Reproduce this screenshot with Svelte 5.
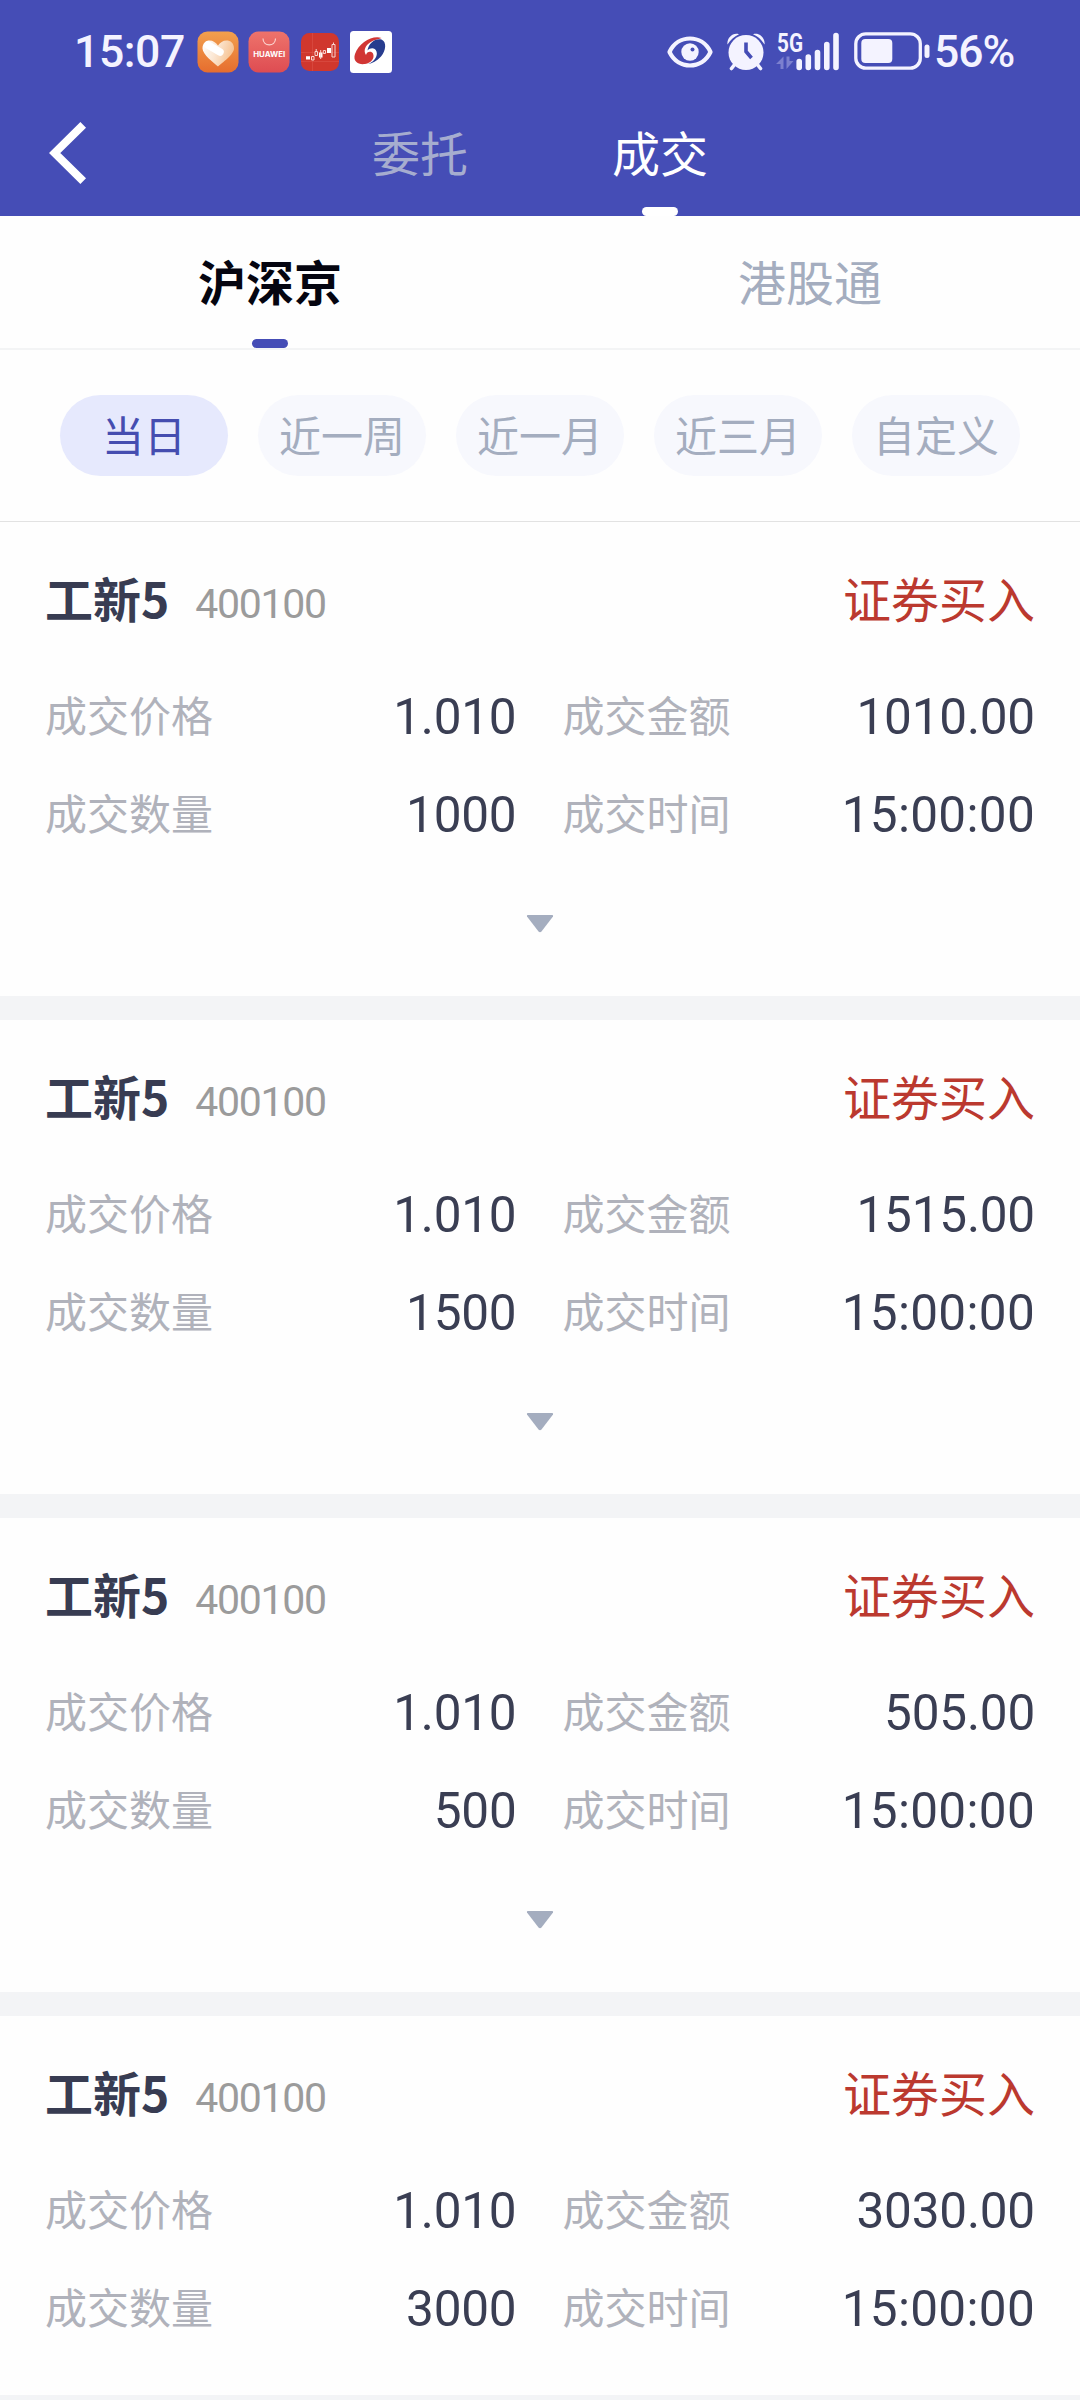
<script>
  const ranges = ['当日', '近一周', '近一月', '近三月', '自定义'];
  let activeRange = $state('当日');

  const trades = [
    { name: '工新5', code: '400100', side: '证券买入', price: '1.010', amount: '1010.00', qty: '1000', time: '15:00:00' },
    { name: '工新5', code: '400100', side: '证券买入', price: '1.010', amount: '1515.00', qty: '1500', time: '15:00:00' },
    { name: '工新5', code: '400100', side: '证券买入', price: '1.010', amount: '505.00', qty: '500', time: '15:00:00' },
    { name: '工新5', code: '400100', side: '证券买入', price: '1.010', amount: '3030.00', qty: '3000', time: '15:00:00' }
  ];
</script>

<div class="screen">
  <header>
    <div class="status">
      <span class="clock">15:07</span>
      <div class="apps">
        <svg width="42" height="42" viewBox="0 0 42 42">
          <defs>
            <linearGradient id="orange" x1="0" y1="0" x2="0" y2="1"><stop offset="0" stop-color="#f2a04e" /><stop offset="1" stop-color="#e66d2e" /></linearGradient>
            <linearGradient id="heart" x1="0" y1="0" x2="1" y2="0.3"><stop offset="0" stop-color="#fff" /><stop offset="0.5" stop-color="#fbe6d2" /><stop offset="1" stop-color="#f6c393" /></linearGradient>
          </defs>
          <rect x="0.5" y="0.5" width="41" height="41" rx="10" fill="url(#orange)" />
          <path d="M21 35.5C17 32 5.500 23.500 5.500 17.500C5.500 12 9 9.500 12.500 9.500C16 9.500 19 11.500 21 14.500C23 11.500 26 9.500 29.500 9.500C33.500 9.500 37 12 37 17.500C37 23.500 25 32 21 35.500Z" fill="url(#heart)" />
          <path d="M11 14L23 21" stroke="#fff" stroke-width="7.500" stroke-linecap="round" />
        </svg>
        <svg width="42" height="42" viewBox="0 0 42 42">
          <defs>
            <linearGradient id="coral" x1="0" y1="0" x2="0" y2="1"><stop offset="0" stop-color="#ee736b" /><stop offset="1" stop-color="#de4c52" /></linearGradient>
          </defs>
          <rect x="0.500" y="0.500" width="41" height="41" rx="10" fill="url(#coral)" />
          <path d="M15 7.500C15 16 27.500 16 27.500 7.500" fill="none" stroke="#fbd3cf" stroke-width="1.200" />
          <text x="21.200" y="26.300" text-anchor="middle" textLength="32" lengthAdjust="spacingAndGlyphs" class="brand">HUAWEI</text>
        </svg>
        <svg width="38" height="38" viewBox="0 0 38 38">
          <rect x="0" y="0" width="38" height="38" rx="8.500" fill="#d0372d" />
          <path d="M0 19.500H38M0 28.500H38M11.500 0V38" stroke="#dc5348" stroke-width="0.600" />
          <path d="M5 23.300H9V26.500H5ZM18 19.500H21.500V24.500H18ZM26 15H30V20H26Z" fill="#fff" />
          <path d="M10.500 23.500H13V27H10.500ZM14 18.500H16.500V22.500H14ZM22.300 17.500H24.500V20.500H22.300ZM31 11.500H34V24H31Z" fill="none" stroke="#f8d5d0" stroke-width="1" />
          <path d="M15.200 16V18M19.700 17V26M32.500 9.500V11.500" stroke="#f8d5d0" stroke-width="1" />
        </svg>
        <svg width="42" height="42" viewBox="0 0 42 42">
          <rect x="0" y="0" width="42" height="42" rx="3.500" fill="#fff" />
          <path d="M31.500 7C22 4 9 12 5 23C2.500 30.500 8.500 34 15 33C21.500 32 25 27 23 22.500C21.500 19.500 16.500 20.500 16 24C13 19.500 15.500 14.500 20 11.500C24 8.800 28 8.500 31.500 7Z" fill="#d13634" />
          <path d="M31.500 8.500C37 11 36 19.500 31 25.500C27 30 22 32.500 18 33C24.500 30.500 28 25 26.500 20.500C25 16 20 16.500 17.500 19.500C18.500 12 25.500 7 31.500 8.500Z" fill="#273c8e" />
        </svg>
      </div>
      <div class="system">
        <svg width="46" height="32" viewBox="0 0 46 32">
          <path d="M2.500 16C11 -2 35 -2 43.500 16C35 34 11 34 2.500 16Z" fill="none" stroke="#f4f3ff" stroke-width="4.200" stroke-linejoin="round" />
          <circle cx="23" cy="16" r="8.700" fill="#f4f3ff" />
          <circle cx="25.500" cy="13.500" r="2" fill="#454db6" />
        </svg>
        <svg class="alarm" width="38" height="38" viewBox="0 0 38 38">
          <path d="M8 31L4.500 35.500M30 31L33.500 35.500" stroke="#f4f3ff" stroke-width="3.600" stroke-linecap="round" />
          <circle cx="19" cy="19.500" r="17.500" fill="#f4f3ff" />
          <path d="M0.500 11.500C-0.500 5.500 5.500 -1 12 1.200C7 3.500 3.500 6.500 0.500 11.500ZM37.500 11.500C38.500 5.500 32.500 -1 26 1.200C31 3.500 34.500 6.500 37.500 11.500Z" fill="#f4f3ff" />
          <path d="M19 9.500V18.500L24.500 25" fill="none" stroke="#454db6" stroke-width="3.600" />
        </svg>
        <svg class="signal" width="64" height="54" viewBox="0 -7 64 54">
          <text x="1" y="20.500" textLength="26" lengthAdjust="spacingAndGlyphs" class="net">5G</text>
          <path d="M0 33L7.500 25.500V38H4.500V33ZM10.500 25.500H13.500V30H17.500L10.500 38Z" fill="#7c80cf" />
          <path d="M23.200 30.500V36.500M32.300 26V36.500M41.500 21.500V36.500M50.800 13.500V36.500M60 4.500V36.500" stroke="#f4f3ff" stroke-width="5.600" stroke-linecap="round" />
        </svg>
        <svg class="battery" width="76" height="38" viewBox="0 0 76 38">
          <rect x="1.800" y="1.800" width="64.500" height="34.400" rx="10" fill="none" stroke="#f4f3ff" stroke-width="3.300" />
          <rect x="7.300" y="7" width="31" height="24" rx="4" fill="#f4f3ff" />
          <rect x="70.500" y="12.500" width="5" height="13.500" rx="2.500" fill="#f4f3ff" />
        </svg>
        <span class="percent">56%</span>
      </div>
    </div>
    <nav class="top">
      <button class="back" aria-label="返回">
        <svg width="42" height="64" viewBox="0 0 42 64"><path d="M37.200 3.800L8.700 32L37.200 60.200" fill="none" stroke="#fff" stroke-width="8" /></svg>
      </button>
      <button class="toptab">委托</button>
      <button class="toptab on">成交</button>
    </nav>
  </header>

  <nav class="markets">
    <button class="on">沪深京</button>
    <button>港股通</button>
  </nav>

  <div class="ranges">
    {#each ranges as range}
      <button class:on={range === activeRange} onclick={() => (activeRange = range)}>{range}</button>
    {/each}
  </div>

  <main>
    {#each trades as trade}
      <article>
        <div class="head">
          <strong>{trade.name}</strong>
          <span class="code">{trade.code}</span>
          <span class="side">{trade.side}</span>
        </div>
        <dl>
          <div><dt>成交价格</dt><dd class="inner">{trade.price}</dd></div>
          <div><dt>成交金额</dt><dd>{trade.amount}</dd></div>
          <div><dt>成交数量</dt><dd class="inner">{trade.qty}</dd></div>
          <div><dt>成交时间</dt><dd class="time">{trade.time}</dd></div>
        </dl>
        <div class="more">
          <svg width="28" height="18" viewBox="0 0 28 18"><path d="M1.500 0H26.500Q27.500 0.500 27 1.500L15.500 16.500Q14 18 12.500 16.500L1 1.500Q0.500 0.500 1.500 0Z" fill="#a4adbf" /></svg>
        </div>
      </article>
    {/each}
  </main>
  <footer></footer>
</div>

<style>
  :global(body) {
    margin: 0;
    background: #fff;
  }
  .screen {
    width: 1080px;
    height: 2400px;
    display: flex;
    flex-direction: column;
    overflow: hidden;
    background: #fefefe;
    font-family: Roboto, 'Noto Sans CJK SC', sans-serif;
  }
  button {
    border: 0;
    padding: 0;
    margin: 0;
    background: none;
    font: inherit;
    color: inherit;
  }
  svg {
    display: block;
    flex: none;
  }
  header {
    flex: none;
    height: 216px;
    background: #454db6;
  }
  .status {
    height: 102px;
    box-sizing: border-box;
    padding: 1px 66px 0 74px;
    display: flex;
    align-items: center;
    color: #f4f3ff;
    font-weight: 500;
    font-size: 44.500px;
    line-height: 52px;
  }
  .clock {
    width: 123px;
    white-space: nowrap;
    letter-spacing: -0.400px;
  }
  .apps {
    display: flex;
    align-items: center;
    gap: 9px;
  }
  .apps svg:nth-child(3) {
    margin: 0 2px;
  }
  .brand {
    font: 700 7px Inter, sans-serif;
    fill: #fff;
  }
  .net {
    font: 700 25px Roboto, sans-serif;
    fill: #f4f3ff;
  }
  .system {
    margin-left: auto;
    display: flex;
    align-items: center;
  }
  .alarm {
    margin-left: 14px;
  }
  .signal {
    margin-left: 11px;
    margin-top: -2px;
  }
  .battery {
    margin-left: 14px;
    margin-right: 4px;
    margin-top: -1px;
  }
  .percent {
    width: 80px;
    white-space: nowrap;
    letter-spacing: -1px;
  }
  .top {
    height: 114px;
    display: flex;
    align-items: stretch;
  }
  .back {
    width: 300px;
    padding: 0 0 12px 46px;
    display: flex;
    align-items: center;
  }
  .toptab {
    width: 240px;
    padding-bottom: 17px;
    display: flex;
    align-items: center;
    justify-content: center;
    position: relative;
    font-size: 48px;
    color: #a6adcf;
  }
  .toptab.on {
    color: #fff;
  }
  .toptab.on::after {
    content: '';
    position: absolute;
    left: 102px;
    bottom: 0;
    width: 36px;
    height: 9px;
    border-radius: 4.500px;
    background: #fff;
  }
  .markets {
    flex: none;
    height: 132px;
    display: grid;
    grid-template-columns: 1fr 1fr;
    border-bottom: 2px solid #f3f4f5;
  }
  .markets button {
    position: relative;
    padding-bottom: 5px;
    font-size: 48px;
    color: #a4adbf;
  }
  .markets .on {
    font-weight: 700;
    color: #050510;
  }
  .markets .on::after {
    content: '';
    position: absolute;
    left: 252px;
    bottom: 0;
    width: 36px;
    height: 9px;
    border-radius: 4.500px;
    background: #454db6;
  }
  .ranges {
    flex: none;
    height: 172px;
    box-sizing: border-box;
    padding: 0 60px;
    display: flex;
    align-items: center;
    gap: 30px;
    border-bottom: 1px solid #e2e2e2;
  }
  .ranges button {
    width: 168px;
    height: 81px;
    padding-bottom: 4px;
    border-radius: 41px;
    background: #f7f8fd;
    font-size: 42px;
    color: #a4adbf;
  }
  .ranges .on {
    background: #e6e9fd;
    color: #454db0;
  }
  main {
    flex: none;
    height: 1873px;
    overflow: hidden;
    display: flex;
    flex-direction: column;
    gap: 24px;
    background: #f3f4f6;
  }
  article {
    flex: none;
    height: 474px;
    box-sizing: border-box;
    padding: 39px 45px 0;
    background: #fefefe;
  }
  .head {
    height: 72px;
    display: flex;
    align-items: baseline;
    line-height: 72px;
  }
  .head strong {
    font: 700 48px/72px 'Noto Sans CJK SC', sans-serif;
    color: #383c52;
  }
  .code {
    margin-left: 26px;
    font-size: 41px;
    letter-spacing: -1.300px;
    color: #9b9b9b;
  }
  .side {
    margin-left: auto;
    font-size: 48px;
    color: #bb392f;
  }
  dl {
    margin: 35px 0 0;
    display: grid;
    grid-template-columns: 1fr 1fr;
    column-gap: 45px;
  }
  dl div {
    height: 98px;
    display: flex;
    align-items: center;
    justify-content: space-between;
    line-height: 98px;
  }
  dt {
    padding-top: 2px;
    font-size: 42px;
    color: #b0b2bb;
  }
  dd {
    margin: 0;
    font-size: 49.500px;
    letter-spacing: -0.200px;
    color: #3a3e53;
  }
  .inner {
    padding-right: 1px;
  }
  .time {
    letter-spacing: 0.300px;
  }
  .more {
    margin-top: 51px;
    display: flex;
    justify-content: center;
  }
  footer {
    flex: none;
    height: 5px;
    background: #f3f4f6;
  }
</style>
